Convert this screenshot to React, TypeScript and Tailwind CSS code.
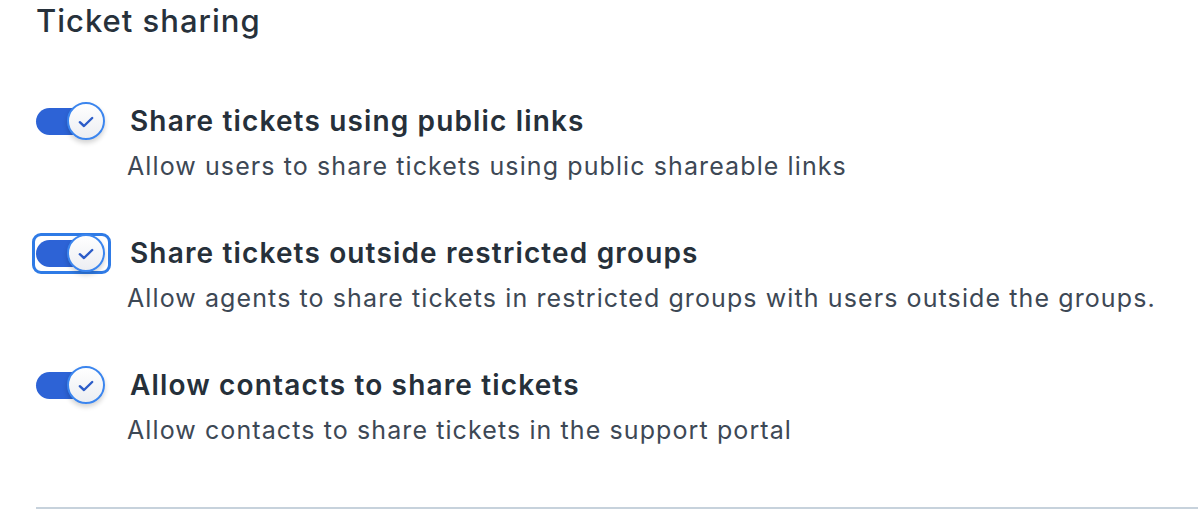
import React from "react";

function Toggle({ focused }: { focused?: boolean }) {
  return (
    <div className="relative w-[72px] h-[38px] shrink-0 mt-[-1px]">
      {focused && (
        <div className="absolute left-[-4px] top-[-1px] w-[79px] h-[41px] rounded-[9px] border-[3px] border-[#2f7be6]" />
      )}
      <div className="absolute left-0 top-[6px] w-[56px] h-[27px] rounded-full bg-[#2d63d6]" />
      <div className="absolute left-[31px] top-0 w-[38px] h-[38px] rounded-full border-2 border-[#3b85ee] bg-gradient-to-b from-[#ffffff] to-[#eceef2] shadow-[0_3px_5px_rgba(0,0,0,0.18)] flex items-center justify-center">
        <svg width="16" height="12" viewBox="0 0 16 12" fill="none" className="mt-[1px]">
          <path d="M1.8 6.2 L6 10 L14.2 2" stroke="#2c5cc8" strokeWidth="2.4" strokeLinecap="round" strokeLinejoin="round" />
        </svg>
      </div>
    </div>
  );
}

function Row({ title, desc, focused }: { title: string; desc: string; focused?: boolean }) {
  return (
    <div className="flex items-start">
      <Toggle focused={focused} />
      <div className="ml-[19px] flex flex-col">
        <div className="pl-[3px] text-[28px] leading-[36px] font-semibold tracking-[1.15px] text-[#26303a]">{title}</div>
        <div className="mt-[11px] text-[25px] leading-[32px] tracking-[1.1px] text-[#3d4855]">{desc}</div>
      </div>
    </div>
  );
}

export default function App() {
  return (
    <div className="w-[1198px] h-[520px] bg-white overflow-hidden pl-[36px]" style={{ fontFamily: "Inter, 'Noto Sans', sans-serif" }}>
      <div className="pt-[3px] text-[31px] leading-[36px] font-medium tracking-[1px] text-[#27313b]">Ticket sharing</div>
      <div className="mt-[64px] flex flex-col gap-[53px]">
        <Row title="Share tickets using public links" desc="Allow users to share tickets using public shareable links" />
        <Row title="Share tickets outside restricted groups" desc="Allow agents to share tickets in restricted groups with users outside the groups." focused />
        <Row title="Allow contacts to share tickets" desc="Allow contacts to share tickets in the support portal" />
      </div>
      <div className="mt-[61px] h-[2px] bg-[#c7d2dc]" />
    </div>
  );
}
